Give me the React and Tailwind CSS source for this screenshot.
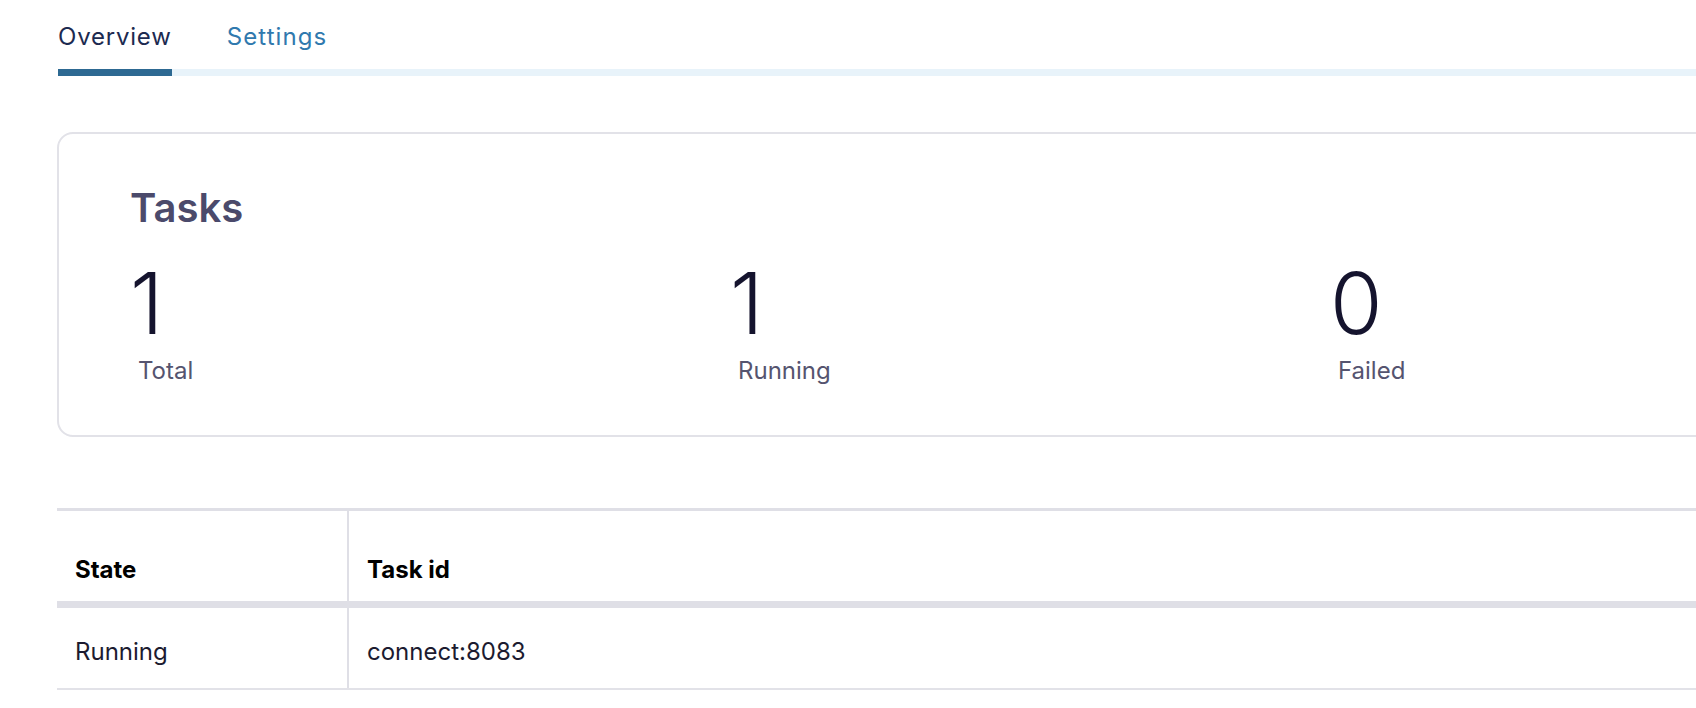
const STATS = [
  { value: 1, label: 'Total' },
  { value: 1, label: 'Running' },
  { value: 0, label: 'Failed' },
];

const TASKS = [{ state: 'Running', id: 'connect:8083' }];

function Tabs() {
  return (
    <div className="ml-[58px] mt-[18px] flex gap-[55px] border-b-[7px] border-[#e8f3fa]">
      <button className="-mb-[7px] border-b-[7px] border-[#2d6992] pb-[14px] text-[24px] leading-[36px] tracking-[0.8px] text-[#1c2a50]">
        Overview
      </button>
      <button className="pb-[14px] text-[24px] leading-[36px] tracking-[1.1px] text-[#3079ae]">
        Settings
      </button>
    </div>
  );
}

function TaskStats() {
  return (
    <div className="ml-[57px] mt-[56px] w-[1900px] rounded-[16px] border-2 border-[#e2e2e8] pb-[46px] pl-[71px] pt-[50px]">
      <h2 className="text-[40px] font-semibold leading-[48px] text-[#4b4a6b]">Tasks</h2>
      <div className="mt-[29px] grid grid-cols-[600px_600px_600px]">
        {STATS.map((s) => (
          <div key={s.label}>
            <div className="text-[85px] font-light leading-[85px] text-[#15142e]">{s.value}</div>
            <div className="ml-[8px] mt-[7px] text-[24px] leading-[36px] text-[#55546f]">{s.label}</div>
          </div>
        ))}
      </div>
    </div>
  );
}

function TaskTable() {
  return (
    <div className="ml-[57px] mt-[71px] w-[1700px]">
      <div className="grid grid-cols-[292px_1fr] border-b-[7px] border-t-[3px] border-[#dfdfe6]">
        <div className="h-[90px] border-r-2 border-[#dfdfe6] pl-[18px] pt-[42px] text-[24px] font-bold leading-[33px] text-black">
          State
        </div>
        <div className="h-[90px] pl-[18px] pt-[42px] text-[24px] font-bold leading-[33px] text-black">
          Task id
        </div>
      </div>
      {TASKS.map((t) => (
        <div key={t.id} className="grid grid-cols-[292px_1fr] border-b-2 border-[#e2e2e8]">
          <div className="h-[80px] border-r-2 border-[#dfdfe6] pl-[18px] pt-[26px] text-[24px] leading-[36px] text-[#1c1b30]">
            {t.state}
          </div>
          <div className="h-[80px] pl-[18px] pt-[26px] text-[24px] leading-[36px] text-[#1c1b30]">
            {t.id}
          </div>
        </div>
      ))}
    </div>
  );
}

export default function App() {
  return (
    <div className="h-[708px] w-[1696px] overflow-hidden bg-white pt-px font-['Inter',sans-serif]">
      <Tabs />
      <TaskStats />
      <TaskTable />
    </div>
  );
}
